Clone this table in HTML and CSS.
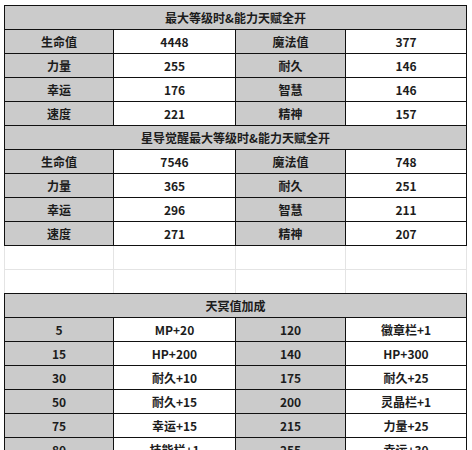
FILE: index.html
```html
<!DOCTYPE html>
<html lang="zh-CN">
<head>
<meta charset="utf-8">
<title>属性表</title>
<link rel="stylesheet" href="styles.css">
</head>
<body>
<div class="sheet">
  <div class="grid">
    <div class="cell title">最大等级时&amp;能力天赋全开</div>
    <div class="cell label">生命值</div><div class="cell">4448</div><div class="cell label">魔法值</div><div class="cell">377</div>
    <div class="cell label">力量</div><div class="cell">255</div><div class="cell label">耐久</div><div class="cell">146</div>
    <div class="cell label">幸运</div><div class="cell">176</div><div class="cell label">智慧</div><div class="cell">146</div>
    <div class="cell label">速度</div><div class="cell">221</div><div class="cell label">精神</div><div class="cell">157</div>
    <div class="cell title">星导觉醒最大等级时&amp;能力天赋全开</div>
    <div class="cell label">生命值</div><div class="cell">7546</div><div class="cell label">魔法值</div><div class="cell">748</div>
    <div class="cell label">力量</div><div class="cell">365</div><div class="cell label">耐久</div><div class="cell">251</div>
    <div class="cell label">幸运</div><div class="cell">296</div><div class="cell label">智慧</div><div class="cell">211</div>
    <div class="cell label">速度</div><div class="cell">271</div><div class="cell label">精神</div><div class="cell">207</div>
  </div>
  <div class="blank">
    <div class="bcell"></div><div class="bcell"></div><div class="bcell"></div><div class="bcell"></div>
    <div class="bcell"></div><div class="bcell"></div><div class="bcell"></div><div class="bcell"></div>
  </div>
  <div class="grid">
    <div class="cell title">天冥值加成</div>
    <div class="cell label">5</div><div class="cell">MP+20</div><div class="cell label">120</div><div class="cell">徽章栏+1</div>
    <div class="cell label">15</div><div class="cell">HP+200</div><div class="cell label">140</div><div class="cell">HP+300</div>
    <div class="cell label">30</div><div class="cell">耐久+10</div><div class="cell label">175</div><div class="cell">耐久+25</div>
    <div class="cell label">50</div><div class="cell">耐久+15</div><div class="cell label">200</div><div class="cell">灵晶栏+1</div>
    <div class="cell label">75</div><div class="cell">幸运+15</div><div class="cell label">215</div><div class="cell">力量+25</div>
    <div class="cell label">80</div><div class="cell">技能栏+1</div><div class="cell label">255</div><div class="cell">幸运+30</div>
  </div>
</div>
</body>
</html>
```

FILE: styles.css
```css
html, body {
  margin: 0;
  padding: 0;
  background: #ffffff;
}

.sheet {
  padding: 5px 0 0 4px;
  font-family: "Noto Sans CJK SC", "Noto Sans", sans-serif;
  font-size: 12px;
  font-weight: bold;
  color: #1c1c1c;
}

.grid {
  display: grid;
  grid-template-columns: 108px 121px 109px 120px;
  gap: 1px;
  background: #111111;
  border: 1px solid #111111;
  width: max-content;
}

.cell {
  height: 23px;
  line-height: 23px;
  text-align: center;
  background: #ffffff;
  white-space: nowrap;
}

.cell.label,
.cell.title {
  background: #cbcbcb;
}

.cell.title {
  grid-column: 1 / -1;
}

.blank {
  display: grid;
  grid-template-columns: 108px 121px 109px 120px;
  gap: 1px;
  background: #e4e4e4;
  border-left: 1px solid #e4e4e4;
  border-right: 1px solid #e4e4e4;
  width: max-content;
}

.bcell {
  height: 23px;
  background: #ffffff;
}
```
